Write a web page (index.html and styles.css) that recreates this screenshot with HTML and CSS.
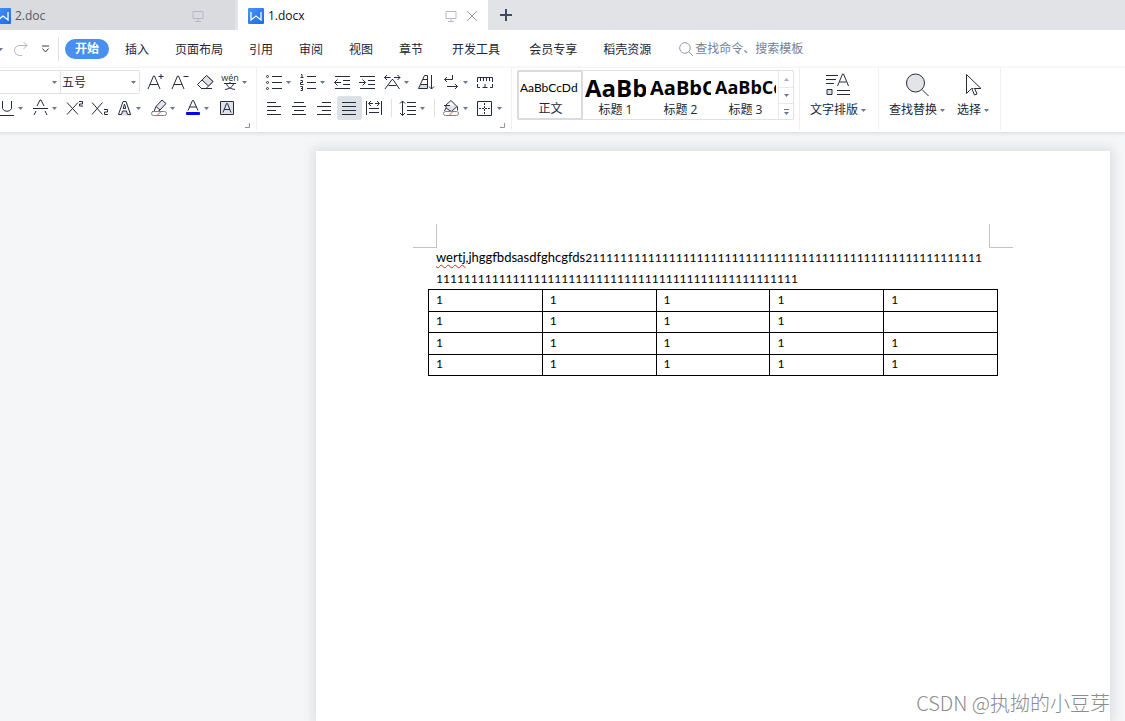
FILE: index.html
```html
<!DOCTYPE html>
<html lang="zh-CN">
<head>
<meta charset="utf-8">
<title>1.docx</title>
<link rel="stylesheet" href="styles.css">
</head>
<body>
<svg class="defs" aria-hidden="true">
  <defs>
    <linearGradient id="logo-fill" x1="0" y1="0" x2="1" y2="1"><stop offset="0" stop-color="#4a94f7"/><stop offset="1" stop-color="#1c6ae8"/></linearGradient>
    <symbol id="logo" viewBox="0 0 16 16"><rect width="16" height="16" rx="1" fill="url(#logo-fill)"/><path d="M3 4v8l5-4 5 4V4" fill="none" stroke="#fff" stroke-width="1.3"/></symbol>
    <symbol id="monitor" viewBox="0 0 12 12"><path d="M1 1.500h10v7H1zM6 8.500v2.500M3 11.500h6" fill="none" stroke="currentColor"/></symbol>
    <symbol id="caret" viewBox="0 0 5 3"><path d="M0 0h5L2.500 3z" fill="#6b7690"/></symbol>
    <symbol id="corner" viewBox="0 0 5 5"><path d="M4.500 0v4.500H0" fill="none" stroke="#8c93a8"/></symbol>
  </defs>
</svg>

<header class="chrome">
  <div class="tabs">
    <div class="tab tab-back"><svg class="logo"><use href="#logo"/></svg><span class="tab-name">2.doc</span><svg class="monitor"><use href="#monitor"/></svg></div>
    <div class="tab tab-active"><svg class="logo"><use href="#logo"/></svg><span class="tab-name">1.docx</span><svg class="monitor"><use href="#monitor"/></svg>
      <button class="close" aria-label="关闭"><svg viewBox="0 0 12 12"><path d="M1 1l10 10M11 1L1 11"/></svg></button></div>
    <button class="new-tab" aria-label="新建"><svg viewBox="0 0 12 12"><path d="M6 0v12M0 6h12"/></svg></button>
  </div>

  <nav class="menu">
    <div class="quick">
      <button class="quick-caret" aria-label="撤销选项"><svg class="caret"><use href="#caret"/></svg></button>
      <button class="redo" aria-label="恢复"><svg viewBox="0 0 14 14"><path d="M8 13.500H5.500a5 5 0 0 1 0-10H13M9.500 0L13 3.500 9.500 7"/></svg></button>
      <button class="more" aria-label="更多"><svg viewBox="0 0 9 8"><path d="M1 1h7M1.500 3.500l3 3.500 3-3.500"/></svg></button>
    </div>
    <button class="menu-item current">开始</button>
    <button class="menu-item">插入</button>
    <button class="menu-item">页面布局</button>
    <button class="menu-item">引用</button>
    <button class="menu-item">审阅</button>
    <button class="menu-item">视图</button>
    <button class="menu-item">章节</button>
    <button class="menu-item extra">开发工具</button>
    <button class="menu-item extra">会员专享</button>
    <button class="menu-item">稻壳资源</button>
    <label class="search"><svg viewBox="0 0 14 14"><circle cx="6" cy="6" r="5.300"/><path d="M10 10l4 4"/></svg><input type="text" aria-label="查找" placeholder="查找命令、搜索模板"></label>
  </nav>

  <div class="ribbon">
    <section class="group font-group">
      <div class="row">
        <div class="combo combo-font"><select aria-label="字体"><option></option></select><svg class="caret"><use href="#caret"/></svg></div>
        <div class="combo combo-size"><select aria-label="字号"><option>五号</option></select><svg class="caret"><use href="#caret"/></svg></div>
        <button class="tool" aria-label="增大字号"><svg class="ico" viewBox="0 0 24 26"><path d="M5 20L10.500 7h1L17 20M7 15.500h8M15.500 7.500h5M18 5v5"/></svg></button>
        <button class="tool" aria-label="减小字号"><svg class="ico" viewBox="0 0 24 26"><path d="M4 20L9.500 7h1L16 20M6 15.500h8M15.500 7.500h5"/></svg></button>
        <button class="tool" aria-label="清除格式"><svg class="ico" viewBox="0 0 24 26"><path d="M13.500 6.500L20 12.500l-7 7H8.500l-4-4z" fill="#fff"/><path d="M13.500 6.500L20 12.500l-4.500 4.500L9 11z" fill="#dfe1e6"/><path d="M8 19.500h11"/></svg></button>
        <button class="tool split" aria-label="拼音指南"><svg class="ico" viewBox="0 0 24 26"><text class="pinyin" x="12" y="12">wén</text><path d="M6 14.500h12M12 13v1.500M8.500 15c1 3 4 5 8.500 5.500M15.500 15c-1 3-4 5-8.500 5.500"/></svg><svg class="caret"><use href="#caret"/></svg></button>
      </div>
      <div class="row">
        <button class="tool split" aria-label="下划线"><svg class="ico" viewBox="0 0 24 26"><path d="M8.500 6v7.500a5 5 0 0 0 9 0V6M5 20.500h15"/></svg><svg class="caret"><use href="#caret"/></svg></button>
        <button class="tool split" aria-label="删除线"><svg class="ico" viewBox="0 0 24 26"><path d="M5 13.500h15M9 11l3-6h1l3 6M8 16l-2 4M17 16l2 4"/></svg><svg class="caret"><use href="#caret"/></svg></button>
        <button class="tool" aria-label="上标"><svg class="ico" viewBox="0 0 24 26"><path d="M5 7.500l11 12M16 7.500l-11 12M17 6.500h3.500v2.500H17.500v2H21" /></svg></button>
        <button class="tool" aria-label="下标"><svg class="ico" viewBox="0 0 24 26"><path d="M5 7.500l10.500 12M15.500 7.500L5 19.500M17 14.500h3.500v2.500H17.500v2.500H21"/></svg></button>
        <button class="tool split" aria-label="文字效果"><svg class="ico" viewBox="0 0 24 26"><path d="M10 20L14.500 7l5 13z" fill="#dedfe3" stroke="#dedfe3"/><path d="M6.500 19.500L11 6.500h3l4.500 13h-3l-1-3.500h-4l-1 3.500zM11.200 13.500h2.600L12.500 9z" fill="#fff"/></svg><svg class="caret"><use href="#caret"/></svg></button>
        <button class="tool split" aria-label="突出显示"><svg class="ico" viewBox="0 0 24 26"><path d="M10 11.500l6-6.500 4 3.500-6 6.500z" fill="#e4e6ea"/><path d="M10 11.500l-2 5h4l2-1.500M6 16.500h3"/><rect x="5.500" y="16.500" width="15" height="4" rx="2" fill="#fff" stroke="#7d818b"/><path d="M11 20.500l4-4" stroke="#f04b45"/></svg><svg class="caret"><use href="#caret"/></svg></button>
        <button class="tool split" aria-label="字体颜色"><svg class="ico" viewBox="0 0 24 26"><path d="M8 15.500L12.500 5.500h1L18 15.500M9.500 12h7"/><rect x="6" y="17" width="14" height="3" rx="1" fill="#0000f5" stroke="none"/></svg><svg class="caret"><use href="#caret"/></svg></button>
        <button class="tool" aria-label="字符底纹"><svg class="ico" viewBox="0 0 24 26"><path d="M6.500 6.500h13v13h-13z" fill="#dfe2e7"/><path d="M9 17.500L12.500 8.500h1L17 17.500M10 14.500h6"/></svg></button>
      </div>
      <svg class="corner"><use href="#corner"/></svg>
    </section>

    <section class="group para-group">
      <div class="row">
        <button class="tool split" aria-label="项目符号"><svg class="ico" viewBox="0 0 24 26"><path d="M10 7.500h10M10 13.500h10M10 19.500h10"/><g><circle cx="5.500" cy="7.500" r="1"/><circle cx="5.500" cy="13.500" r="1"/><circle cx="5.500" cy="19.500" r="1"/></g></svg><svg class="caret"><use href="#caret"/></svg></button>
        <button class="tool split" aria-label="编号"><svg class="ico" viewBox="0 0 24 26"><path d="M11 7.500h9M11 13.500h9M11 19.500h9M5 5.500h1v3M4.500 8.500h3M4.500 11.500h2v2h-2v2h3M4.500 17.500h2v4h-2M5 19.500h1.500"/></svg><svg class="caret"><use href="#caret"/></svg></button>
        <button class="tool" aria-label="减少缩进"><svg class="ico" viewBox="0 0 24 26"><path d="M5 7.500h15M13 11.500h7M13 15.500h7M5 19.500h15M4.500 13.500H11M7.500 10.500l-3 3 3 3"/></svg></button>
        <button class="tool" aria-label="增加缩进"><svg class="ico" viewBox="0 0 24 26"><path d="M5 7.500h15M13 11.500h7M13 15.500h7M5 19.500h15M4 13.500h6.500M7.500 10.500l3 3-3 3"/></svg></button>
        <button class="tool split" aria-label="中文版式"><svg class="ico" viewBox="0 0 24 26"><path d="M4.500 8.500h6M7 6L4.500 8.500 7 11M14 8.500h6M17.500 6L20 8.500 17.500 11M5 20l7-9.500h1L19.500 20M8.500 16.500h8"/></svg><svg class="caret"><use href="#caret"/></svg></button>
        <button class="tool" aria-label="排序"><svg class="ico" viewBox="0 0 24 26"><path d="M5 19l2-3.500h6V19z" fill="#d9dce2" stroke="none"/><path d="M4.500 19.500l6-13h3v13zM7 15.500h6M9 10.500h4.500"/><path d="M17.500 6v14M15 17.500l2.500 2.500 2.500-2.500"/></svg></button>
        <button class="tool split" aria-label="换行符"><svg class="ico" viewBox="0 0 24 26"><path d="M13.500 6v4.500h-8M8 8l-2.500 2.500L8 13M8 17.500h10.500M16 15l2.500 2.500L16 20"/></svg><svg class="caret"><use href="#caret"/></svg></button>
        <button class="tool" aria-label="标尺"><svg class="ico" viewBox="0 0 24 26"><path d="M4.500 13V8.500h15V13M7.500 8.500V12M10.500 8.500V12M13.500 8.500V12M16.500 8.500V12M4.500 15v3.500H7M19.500 15v3.500H17M9.500 18.500h5M12 15v3.500"/></svg></button>
      </div>
      <div class="row">
        <button class="tool" aria-label="左对齐"><svg class="ico" viewBox="0 0 24 26"><path d="M5 7.500h9M5 11.500h14M5 15.500h9M5 19.500h14"/></svg></button>
        <button class="tool" aria-label="居中"><svg class="ico" viewBox="0 0 24 26"><path d="M7 7.500h10M5 11.500h14M7 15.500h10M5 19.500h14"/></svg></button>
        <button class="tool" aria-label="右对齐"><svg class="ico" viewBox="0 0 24 26"><path d="M10 7.500h9M5 11.500h14M10 15.500h9M5 19.500h14"/></svg></button>
        <button class="tool pressed" aria-label="两端对齐" aria-pressed="true"><svg class="ico" viewBox="0 0 24 26"><path d="M5 7.500h14M5 11.500h14M5 15.500h14M5 19.500h14"/></svg></button>
        <button class="tool" aria-label="分散对齐"><svg class="ico" viewBox="0 0 24 26"><path d="M4.500 6v14M19.500 6v14M7 13.500h10M7 17.500h10M7 8.500h4M9 6L6.500 8.500 9 11M13 8.500h4M15 6l2.500 2.500L15 11"/></svg></button>
        <span class="divider"></span>
        <button class="tool split" aria-label="行距"><svg class="ico" viewBox="0 0 24 26"><path d="M11 7.500h9M11 11.500h9M11 15.500h9M11 19.500h9M6.500 6v14.500M4 8.500L6.500 6 9 8.500M4 18l2.500 2.500L9 18"/></svg><svg class="caret"><use href="#caret"/></svg></button>
        <span class="divider"></span>
        <button class="tool split" aria-label="底纹颜色"><svg class="ico" viewBox="0 0 24 26"><path d="M6.500 10.500L12 5.500l6 6-5.500 5-5-3z" fill="#e1e3e8"/><path d="M7.500 10.500L12 6.500l3 4z" fill="#fff" stroke="none"/><path d="M5 10.500h6M18.500 11.500v4M7 13l-1.500 3"/><rect x="4.500" y="16.500" width="15" height="4" rx="2" fill="#fff" stroke="#7d818b"/><path d="M10 20.500l4-4" stroke="#f04b45"/></svg><svg class="caret"><use href="#caret"/></svg></button>
        <button class="tool split" aria-label="边框"><svg class="ico" viewBox="0 0 24 26"><path d="M4.500 6.500h14v14h-14z"/><path d="M11.500 8v11M6 13.500h11" stroke-dasharray="2 1"/></svg><svg class="caret"><use href="#caret"/></svg></button>
      </div>
      <svg class="corner"><use href="#corner"/></svg>
    </section>

    <section class="group style-group">
      <div class="gallery">
        <button class="style chosen"><span class="preview">AaBbCcDd</span><span>正文</span></button>
        <button class="style"><span class="preview h1">AaBb</span><span>标题 1</span></button>
        <button class="style"><span class="preview h2">AaBbC</span><span>标题 2</span></button>
        <button class="style"><span class="preview h3">AaBbCc</span><span>标题 3</span></button>
        <div class="scroll">
          <button aria-label="向上"><svg class="caret up"><use href="#caret"/></svg></button>
          <button aria-label="向下"><svg class="caret"><use href="#caret"/></svg></button>
          <button aria-label="展开"><svg class="expand" viewBox="0 0 5 6"><path d="M0 .5h5" stroke="#6b7690"/><path d="M0 3h5L2.500 6z" fill="#6b7690"/></svg></button>
        </div>
      </div>
    </section>

    <section class="group layout-group">
      <button class="big"><svg viewBox="0 0 24 24"><path d="M0 2.500h12M0 6.500h10M0 10.500h8M11.500 13L16.500 1h1l5 12M13.500 9h7M11 17.500h13M11 21.500h13"/><path d="M1 16.500h5v5H1z" fill="#dfe1e6"/></svg><span>文字排版<svg class="caret"><use href="#caret"/></svg></span></button>
    </section>

    <section class="group edit-group">
      <button class="big"><svg viewBox="0 0 24 24"><circle cx="10.500" cy="10" r="9" fill="#e3e4e7"/><path d="M17 16.500l6.500 6.500"/></svg><span>查找替换<svg class="caret"><use href="#caret"/></svg></span></button>
      <button class="big"><svg viewBox="0 0 24 24"><path d="M5.500 1.500v19l5-5h9.500z"/><path d="M11 16l2.500 6 2.500-1-2.500-6" fill="#fff"/></svg><span>选择<svg class="caret"><use href="#caret"/></svg></span></button>
    </section>
  </div>
</header>

<main class="canvas">
  <article class="sheet">
    <svg class="mark" viewBox="0 0 24 24"><path d="M0 23.500h24M23.500 0v24"/></svg>
    <svg class="mark mark-right" viewBox="0 0 24 24"><path d="M0 23.500h24M.5 0v24"/></svg>
    <p class="text"><span class="letters"><span class="typo">wertj</span>,jhggfbdsasdfghcgfds</span>211111111111111111111111111111111111111111111111111111111<br>1111111111111111111111111111111111111111111111111111</p>
    <table class="grid">
      <tr><td>1</td><td>1</td><td>1</td><td>1</td><td>1</td></tr>
      <tr><td>1</td><td>1</td><td>1</td><td>1</td><td></td></tr>
      <tr><td>1</td><td>1</td><td>1</td><td>1</td><td>1</td></tr>
      <tr><td>1</td><td>1</td><td>1</td><td>1</td><td>1</td></tr>
    </table>
  </article>
  <div class="watermark">CSDN @执拗的小豆芽</div>
</main>
</body>
</html>
```
FILE: styles.css
```css
* { box-sizing: border-box; }

body {
  margin: 0;
  height: 100vh;
  display: flex;
  flex-direction: column;
  overflow: hidden;
  font: 12px/18px "Open Sans", "Noto Sans CJK SC", sans-serif;
  color: #20263a;
  background: #f5f6f8;
}

button, select, input {
  margin: 0;
  padding: 0;
  border: 0;
  background: none;
  font: inherit;
  color: inherit;
}

button { white-space: nowrap; }
svg { display: block; flex: none; }
.defs { position: absolute; width: 0; height: 0; }
.caret { width: 5px; height: 3px; }

.chrome { margin-left: -6px; position: relative; z-index: 1; }

/* Document tabs */
.tabs { display: flex; height: 30px; background: #e1e3e7; }
.tab { display: flex; align-items: center; padding-top: 1px; font-size: 12px; }
.tab-back { width: 241px; padding-left: 1px; padding-right: 31px; background: #d9dbdf; color: #555a66; }
.tab-active { width: 250px; margin-left: 3px; padding: 1px 10px 0 10px; background: #fff; color: #111; }
.logo { width: 16px; height: 16px; }
.tab-name { flex: 1; margin-left: 4px; }
.monitor { width: 12px; height: 12px; color: #b3bacb; }
.close { margin-left: 9px; }
.close svg { width: 12px; height: 12px; fill: none; stroke: #929bb2; }
.new-tab { width: 36px; display: grid; place-items: center; }
.new-tab svg { width: 12px; height: 12px; stroke: #3f4a66; stroke-width: 2; }

/* Menu */
.menu { display: flex; align-items: center; height: 38px; background: #fff; }
.quick { display: flex; align-items: center; width: 65px; height: 24px; padding-left: 4px; border-right: 1px solid #dfe1e5; }
.redo { margin-left: 11px; }
.redo svg { width: 14px; height: 14px; fill: none; stroke: #b2b5bc; }
.more { margin-left: 13px; }
.more svg { width: 9px; height: 8px; fill: none; stroke: #333a4d; }
.menu-item { padding: 2px 13px 0; }
.menu-item.current { margin: 0 3px 0 6px; padding: 0 10px; height: 20px; line-height: 20px; border-radius: 10px; background: #488ff0; color: #fff; font-weight: 700; }
.menu-item.extra { margin-left: 3px; }
.search { display: flex; align-items: center; gap: 2px; margin-left: 15px; }
.search svg { width: 14px; height: 14px; fill: none; stroke: #9299ae; }
.search input { width: 130px; outline: none; }
.search input::placeholder { color: #757e96; opacity: 1; }

/* Ribbon */
.ribbon { display: flex; height: 64px; padding-bottom: 2px; background: #fff; box-shadow: 0 1px 4px #d3d5d9; }
.group { position: relative; border-right: 1px solid #eeeff1; padding-top: 1px; }
.font-group { width: 263px; }
.para-group { width: 255px; padding-left: 5px; }
.row { display: flex; align-items: center; height: 26px; }
.corner { position: absolute; right: 6px; bottom: 2px; width: 5px; height: 5px; }

.tool { display: flex; align-items: center; width: 25px; height: 24px; }
.tool.split { width: 34px; }
.pressed { background: #dce1e6; border-radius: 2px; }
.ico { width: 24px; height: 26px; fill: none; stroke: #252c40; }
.pinyin { font-size: 9px; text-anchor: middle; fill: #252c40; stroke: none; }
.divider { width: 1px; height: 18px; margin: 0 4px; background: #dfe1e6; }

.combo { display: flex; align-items: center; height: 24px; border: 1px solid #dfe1e5; padding-right: 3px; }
.combo select { flex: 1; min-width: 0; padding-top: 1px; appearance: none; outline: none; }
.combo-font { width: 67px; }
.combo-size { width: 79px; margin-right: 3px; padding-left: 1px; border-left: 0; border-radius: 0 2px 2px 0; }

.style-group { width: 288px; padding: 2px 5px 0; }
.gallery { display: flex; height: 50px; border: 1px solid #dfe1e5; border-radius: 2px; }
.style { display: flex; flex-direction: column; align-items: center; width: 65px; padding: 3px 2px 0; overflow: hidden; }
.style.chosen { margin: -1px 0 -1px -1px; width: 66px; border: 2px solid #d9dbe0; border-radius: 2px; padding: 2px 0 0 1px; }
.preview { width: 100%; height: 27px; line-height: 27px; overflow: hidden; color: #000; text-align: left; font-family: Lato, sans-serif; }
.h1, .h2, .h3 { font-family: "Open Sans", sans-serif; font-weight: 700; }
.h1 { font-size: 24px; }
.h2 { font-size: 20px; }
.h3 { font-size: 18px; }
.scroll { flex: 1; display: grid; grid-template-rows: 1fr 1fr 1fr; border-left: 1px solid #e7e8eb; }
.scroll button { display: grid; place-items: center; }
.scroll button + button { border-top: 1px solid #e7e8eb; }
.up { transform: rotate(180deg); opacity: .6; }
.expand { width: 5px; height: 6px; }

.big { display: flex; flex-direction: column; align-items: center; gap: 4px; padding-top: 4px; }
.big > svg { width: 24px; height: 24px; fill: none; stroke: #252c40; }
.big > span { display: flex; align-items: center; gap: 3px; }
.layout-group { width: 79px; padding-left: 10px; }
.edit-group { display: flex; align-items: flex-start; gap: 12px; width: 122px; padding-left: 10px; }

/* Document */
.canvas { flex: 1; position: relative; display: flex; justify-content: flex-end; padding: 19px 15px 0; min-height: 0; }
.sheet { position: relative; width: 794px; padding: 96px 120px 0; background: #fff; box-shadow: 0 0 10px 3px #dcdee1; color: #000; font: 12px/21px Lato, sans-serif; }
.mark { position: absolute; top: 73px; left: 97px; width: 24px; height: 24px; fill: none; stroke: #c4c4c4; }
.mark-right { left: auto; right: 97px; }
.text { margin: 0; white-space: nowrap; }
.letters { font-size: 13px; line-height: 20px; }
.typo { text-decoration: underline wavy #e02020 1px; text-underline-offset: 2px; }
.grid { width: calc(100% + 16px); height: 87px; margin: 0 -8px; border-collapse: collapse; table-layout: fixed; line-height: 18px; }
.grid td { border: 1px solid #000; padding: 0 6px 1px 7px; }
.watermark { position: absolute; right: 15px; bottom: 4px; font: 300 20px/28px "Noto Sans CJK SC", sans-serif; color: #8c8c8c; }
```
